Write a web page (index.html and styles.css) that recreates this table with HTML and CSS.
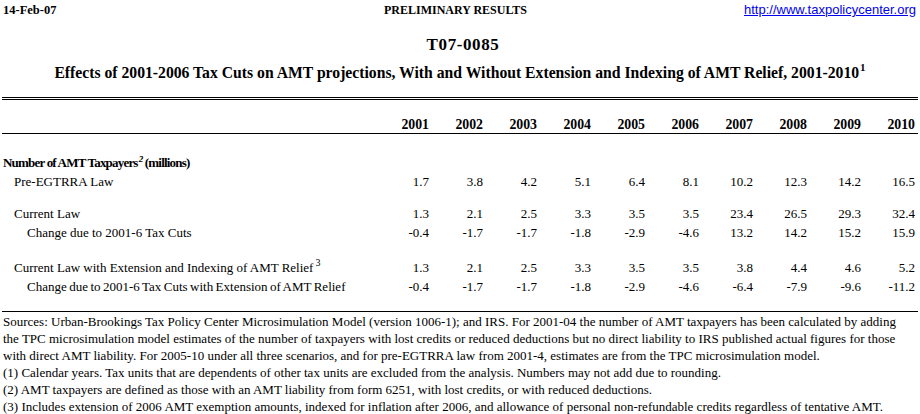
FILE: index.html
```html
<!DOCTYPE html>
<html>
<head>
<meta charset="utf-8">
<link rel="stylesheet" href="styles.css">
</head>
<body>
<div class="page">
  <header class="topbar">
    <span class="date">14-Feb-07</span>
    <span class="prelim">PRELIMINARY RESULTS</span>
    <a class="url" href="#">http://www.taxpolicycenter.org</a>
  </header>
  <h1 class="code">T07-0085</h1>
  <h2 class="title">Effects of 2001-2006 Tax Cuts on AMT projections, With and Without Extension and Indexing of AMT Relief, 2001-2010<sup class="tsup">1</sup></h2>
  <div class="rule-double"></div>

  <div class="table">
    <div class="row head">
      <span class="label"></span>
      <span>2001</span><span>2002</span><span>2003</span><span>2004</span><span>2005</span><span>2006</span><span>2007</span><span>2008</span><span>2009</span><span>2010</span>
    </div>
    <div class="row section">
      <span class="label bold">Number of AMT Taxpayers<sup class="fsup">2</sup> (millions)</span>
    </div>
    <div class="row">
      <span class="label ind1">Pre-EGTRRA Law</span>
      <span>1.7</span><span>3.8</span><span>4.2</span><span>5.1</span><span>6.4</span><span>8.1</span><span>10.2</span><span>12.3</span><span>14.2</span><span>16.5</span>
    </div>
    <div class="spacer s1"></div>
    <div class="row">
      <span class="label ind1">Current Law</span>
      <span>1.3</span><span>2.1</span><span>2.5</span><span>3.3</span><span>3.5</span><span>3.5</span><span>23.4</span><span>26.5</span><span>29.3</span><span>32.4</span>
    </div>
    <div class="row">
      <span class="label ind2">Change due to 2001-6 Tax Cuts</span>
      <span>-0.4</span><span>-1.7</span><span>-1.7</span><span>-1.8</span><span>-2.9</span><span>-4.6</span><span>13.2</span><span>14.2</span><span>15.2</span><span>15.9</span>
    </div>
    <div class="spacer s2"></div>
    <div class="row">
      <span class="label ind1">Current Law with Extension and Indexing of AMT Relief<sup class="rsup">3</sup></span>
      <span>1.3</span><span>2.1</span><span>2.5</span><span>3.3</span><span>3.5</span><span>3.5</span><span>3.8</span><span>4.4</span><span>4.6</span><span>5.2</span>
    </div>
    <div class="row">
      <span class="label ind2 tight">Change due to 2001-6 Tax Cuts with Extension of AMT Relief</span>
      <span>-0.4</span><span>-1.7</span><span>-1.7</span><span>-1.8</span><span>-2.9</span><span>-4.6</span><span>-6.4</span><span>-7.9</span><span>-9.6</span><span>-11.2</span>
    </div>
  </div>

  <div class="notes">
    <p>Sources: Urban-Brookings Tax Policy Center Microsimulation Model (version 1006-1); and IRS. For 2001-04 the number of AMT taxpayers has been calculated by adding<br>the TPC microsimulation model estimates of the number of taxpayers with lost credits or reduced deductions but no direct liability to IRS published actual figures for those<br>with direct AMT liability. For 2005-10 under all three scenarios, and for pre-EGTRRA law from 2001-4, estimates are from the TPC microsimulation model.</p>
    <p>(1) Calendar years. Tax units that are dependents of other tax units are excluded from the analysis. Numbers may not add due to rounding.</p>
    <p>(2) AMT taxpayers are defined as those with an AMT liability from form 6251, with lost credits, or with reduced deductions.</p>
    <p>(3) Includes extension of 2006 AMT exemption amounts, indexed for inflation after 2006, and allowance of personal non-refundable credits regardless of tentative AMT.</p>
  </div>
</div>
</body>
</html>
```

FILE: styles.css
```css
html, body {
  margin: 0;
  padding: 0;
  background: #ffffff;
  color: #000000;
}

.page {
  width: 920px;
  padding: 0 2px 0 2px;
  box-sizing: border-box;
  font-family: "Liberation Serif", "Times New Roman", serif;
}

.topbar {
  display: grid;
  grid-template-columns: 1fr auto 1fr;
  align-items: center;
  height: 20px;
  line-height: 20px;
  padding: 0 2px 0 1px;
}

.date {
  justify-self: start;
  font-weight: bold;
  font-size: 12.5px;
}

.prelim {
  justify-self: center;
  font-weight: bold;
  font-size: 12px;
  margin-left: -8px;
}

.url {
  justify-self: end;
  font-family: "Liberation Sans", Arial, sans-serif;
  font-size: 13px;
  color: #0000ee;
  text-decoration: underline;
}

.code {
  margin: 15px 0 0 0;
  font-size: 17px;
  letter-spacing: 0.6px;
  line-height: 20px;
  text-align: center;
  font-weight: bold;
  padding-left: 6px;
}

.title {
  margin: 8px 0 0 0;
  font-size: 15.7px;
  line-height: 20px;
  text-align: center;
  font-weight: bold;
  white-space: nowrap;
}

.tsup {
  font-size: 11px;
  vertical-align: 7px;
  line-height: 0;
  margin-left: 1px;
}

.rule-double {
  margin-top: 14px;
  height: 1px;
  border-top: 1px solid #000;
  border-bottom: 1px solid #000;
}

.table {
  font-size: 13px;
}

.row {
  display: grid;
  grid-template-columns: 373px repeat(10, 54px);
  height: 19px;
  line-height: 19px;
  align-items: center;
}

.row > span {
  text-align: right;
  white-space: nowrap;
}

.row > .label {
  text-align: left;
  padding-left: 1px;
}

.row.head {
  margin-top: 17px;
  height: 16px;
  line-height: 16px;
  border-bottom: 1px solid #000;
  font-weight: bold;
  font-size: 13.8px;
}

.row.section {
  margin-top: 19px;
}

.bold {
  font-weight: bold;
  font-size: 13px;
  letter-spacing: -0.8px;
}

.ind1 {
  padding-left: 12px !important;
}

.ind2 {
  padding-left: 25px !important;
}

.tight {
  word-spacing: -0.8px;
}

.fsup {
  font-size: 9px;
  font-style: italic;
  vertical-align: 5px;
  line-height: 0;
  margin-left: 1px;
}

.rsup {
  font-size: 10px;
  vertical-align: 6px;
  line-height: 0;
  margin-left: 2px;
}

.spacer.s1 {
  height: 13px;
}

.spacer.s2 {
  height: 16px;
}

.notes {
  margin-top: 15px;
  border-top: 1px solid #000;
  padding-top: 1px;
  font-size: 13px;
  line-height: 17px;
  white-space: nowrap;
  padding-left: 1px;
}

.notes p {
  margin: 0;
}
```
